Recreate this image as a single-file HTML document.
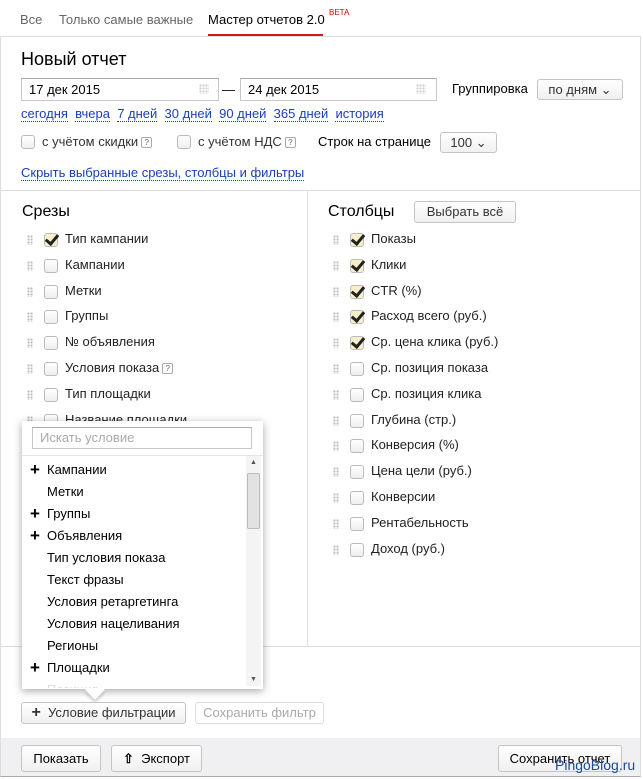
<!DOCTYPE html><html><head><meta charset="utf-8"><style>
*{box-sizing:border-box}body{margin:0;width:643px;height:779px;background:#fff;font-family:"Liberation Sans",Arial,sans-serif;font-size:13px;color:#000;position:relative;overflow:hidden}
.a{position:absolute;white-space:nowrap}
.lnk{color:#1a3dc1;border-bottom:1px dotted #1a3dc1;line-height:14px}
.btn{position:absolute;border:1px solid #c4c4c4;border-radius:3px;background:linear-gradient(#fff,#f0f0f0);text-align:center;font-size:13px;line-height:19px}
.inp{position:absolute;border:1px solid #c8c8c8;border-top-color:#a8a8a8;height:23px;padding:3px 7px;font-size:13px}
.cb{position:absolute;width:14px;height:14px;border:1px solid #bbb;border-radius:3px;background:linear-gradient(#fff,#eee)}
.cb.on{background:#f7efc8}
.cb.on:after{content:"";position:absolute;left:3px;top:-2px;width:5px;height:10px;border:solid #222;border-width:0 3px 3px 0;transform:rotate(40deg)}
.dr{position:absolute;width:6px;height:10px;background:radial-gradient(circle,#bbb 1px,transparent 1.2px) 0 0/3px 3px}
.q{display:inline-block;width:11px;height:11px;border:1px solid #aaa;font-size:8px;line-height:9px;text-align:center;color:#666;vertical-align:1px;margin-left:3px;border-radius:2px}
.it{position:absolute;left:47px;font-size:13px}
.pl{position:absolute;left:30px;font-size:17px;font-weight:bold;line-height:13px}
</style></head><body>
<div class="a" style="left:20px;top:12px;color:#666">Все</div>
<div class="a" style="left:59px;top:12px;color:#666">Только самые важные</div>
<div class="a" style="left:208px;top:12px">Мастер отчетов 2.0</div>
<div class="a" style="left:329px;top:8px;color:#d00;font-size:8px">BETA</div>
<div class="a" style="left:208px;top:34px;width:115px;height:2px;background:#c62020"></div>
<div class="a" style="left:0;top:36px;width:641px;height:741px;border:1px solid #ddd;border-bottom-color:#aaa"></div>
<div class="a" style="left:21px;top:49px;font-size:18px">Новый отчет</div>
<div class="inp" style="left:21px;top:78px;width:198px">17 дек 2015</div>
<div class="a" style="left:222px;top:82px">—</div>
<div class="inp" style="left:240px;top:78px;width:197px">24 дек 2015</div>
<div class="dr" style="left:199px;top:84px;width:10px;background:radial-gradient(circle,#ccc 1px,transparent 1.2px) 0 0/3px 3px"></div>
<div class="dr" style="left:416px;top:84px;width:10px;background:radial-gradient(circle,#ccc 1px,transparent 1.2px) 0 0/3px 3px"></div>
<div class="a" style="left:452px;top:81px">Группировка</div>
<div class="btn" style="left:537px;top:79px;width:86px;height:21px;color:#333">по дням ⌄</div>
<div class="a" style="left:21px;top:106px;font-size:13px"><span class="lnk">сегодня</span>&nbsp;&nbsp;<span class="lnk">вчера</span>&nbsp;&nbsp;<span class="lnk">7 дней</span>&nbsp;&nbsp;<span class="lnk">30 дней</span>&nbsp;&nbsp;<span class="lnk">90 дней</span>&nbsp;&nbsp;<span class="lnk">365 дней</span>&nbsp;&nbsp;<span class="lnk">история</span></div>
<div class="cb" style="left:21px;top:135px"></div><div class="a" style="left:42px;top:134px;color:#333">с учётом скидки<span class="q">?</span></div>
<div class="cb" style="left:177px;top:135px"></div><div class="a" style="left:198px;top:134px;color:#333">с учётом НДС<span class="q">?</span></div>
<div class="a" style="left:318px;top:134px">Строк на странице</div>
<div class="btn" style="left:440px;top:132px;width:57px;height:21px;color:#333">100 ⌄</div>
<div class="a" style="left:21px;top:165px"><span class="lnk">Скрыть выбранные срезы, столбцы и фильтры</span></div>
<div class="a" style="left:1px;top:190px;width:639px;height:1px;background:#ddd"></div>
<div class="a" style="left:307px;top:190px;width:1px;height:457px;background:#ddd"></div>
<div class="a" style="left:1px;top:646px;width:639px;height:1px;background:#ddd"></div>
<div class="a" style="left:22px;top:203px;font-size:16px">Срезы</div>
<div class="a" style="left:328px;top:203px;font-size:16px">Столбцы</div>
<div class="btn" style="left:414px;top:201px;width:102px;height:22px;color:#333">Выбрать всё</div>
<div id="L"></div>
<script>
var l=["Тип кампании","Кампании","Метки","Группы","№ объявления","Условия показа","Тип площадки","Название площадки"],r=["Показы","Клики","CTR (%)","Расход всего (руб.)","Ср. цена клика (руб.)","Ср. позиция показа","Ср. позиция клика","Глубина (стр.)","Конверсия (%)","Цена цели (руб.)","Конверсии","Рентабельность","Доход (руб.)"],h="";
function row(x,y,t,on){return '<div class="dr" style="left:'+(x+6)+'px;top:'+(y+4)+'px"></div><div class="cb'+(on?' on':'')+'" style="left:'+(x+23)+'px;top:'+(y+2)+'px"></div><div class="a" style="left:'+(x+44)+'px;top:'+y+'px;color:#222">'+t+(t=="Условия показа"?'<span class="q">?</span>':'')+'</div>';}
l.forEach(function(t,i){h+=row(21,231+i*25.8,t,i==0)});r.forEach(function(t,i){h+=row(327,231+i*25.8,t,i<5)});
document.getElementById("L").innerHTML=h;
</script>
<div class="a" style="left:22px;top:421px;width:241px;height:268px;background:#fff;box-shadow:0 2px 8px rgba(0,0,0,.35)"></div>
<div class="a" style="left:88px;top:683px;width:14px;height:14px;background:#fff;transform:rotate(45deg);box-shadow:2px 2px 3px rgba(0,0,0,.2)"></div>
<div class="a" style="left:22px;top:670px;width:241px;height:19px;background:#fff"></div>
<div class="inp" style="left:32px;top:427px;width:220px;height:22px;color:#aaa;padding:2px 7px">Искать условие</div>
<div class="a" style="left:22px;top:455px;width:241px;height:1px;background:#e5e5e5"></div>
<div class="a" style="left:246px;top:456px;width:15px;height:230px;background:#f4f4f4"></div>
<div class="a" style="left:247px;top:473px;width:13px;height:56px;background:#e2e2e2;border:1px solid #bbb;border-radius:2px"></div>
<div class="a" style="left:250px;top:459px;font-size:7px;color:#555">▲</div>
<div class="a" style="left:250px;top:676px;font-size:7px;color:#555">▼</div>
<div class="pl" style="top:463px">+</div><div class="it" style="top:462px">Кампании</div>
<div class="it" style="top:484px">Метки</div>
<div class="pl" style="top:507px">+</div><div class="it" style="top:506px">Группы</div>
<div class="pl" style="top:529px">+</div><div class="it" style="top:528px">Объявления</div>
<div class="it" style="top:550px">Тип условия показа</div>
<div class="it" style="top:572px">Текст фразы</div>
<div class="it" style="top:594px">Условия ретаргетинга</div>
<div class="it" style="top:616px">Условия нацеливания</div>
<div class="it" style="top:638px">Регионы</div>
<div class="pl" style="top:661px">+</div><div class="it" style="top:660px">Площадки</div>
<div class="it" style="top:682px;color:#ddd;height:6px;overflow:hidden">Позиция</div>
<div class="btn" style="left:21px;top:702px;width:165px;height:22px;color:#333"><b style="font-size:16px">+</b>&nbsp; Условие фильтрации</div>
<div class="btn" style="left:195px;top:702px;width:129px;height:22px;color:#aaa;border-color:#ddd;background:#fff">Сохранить фильтр</div>
<div class="a" style="left:1px;top:738px;width:639px;height:38px;background:#f0f0f2"></div>
<div class="btn" style="left:21px;top:745px;width:80px;height:27px;line-height:25px">Показать</div>
<div class="btn" style="left:111px;top:745px;width:91px;height:27px;line-height:25px"><span style="font-weight:bold">⇧</span>&nbsp; Экспорт</div>
<div class="btn" style="left:498px;top:745px;width:124px;height:27px;line-height:25px">Сохранить отчет</div>
<div class="a" style="left:555px;top:757px;color:#1a4a9a;font-size:14px">PingoBlog.ru</div>
</body></html>
